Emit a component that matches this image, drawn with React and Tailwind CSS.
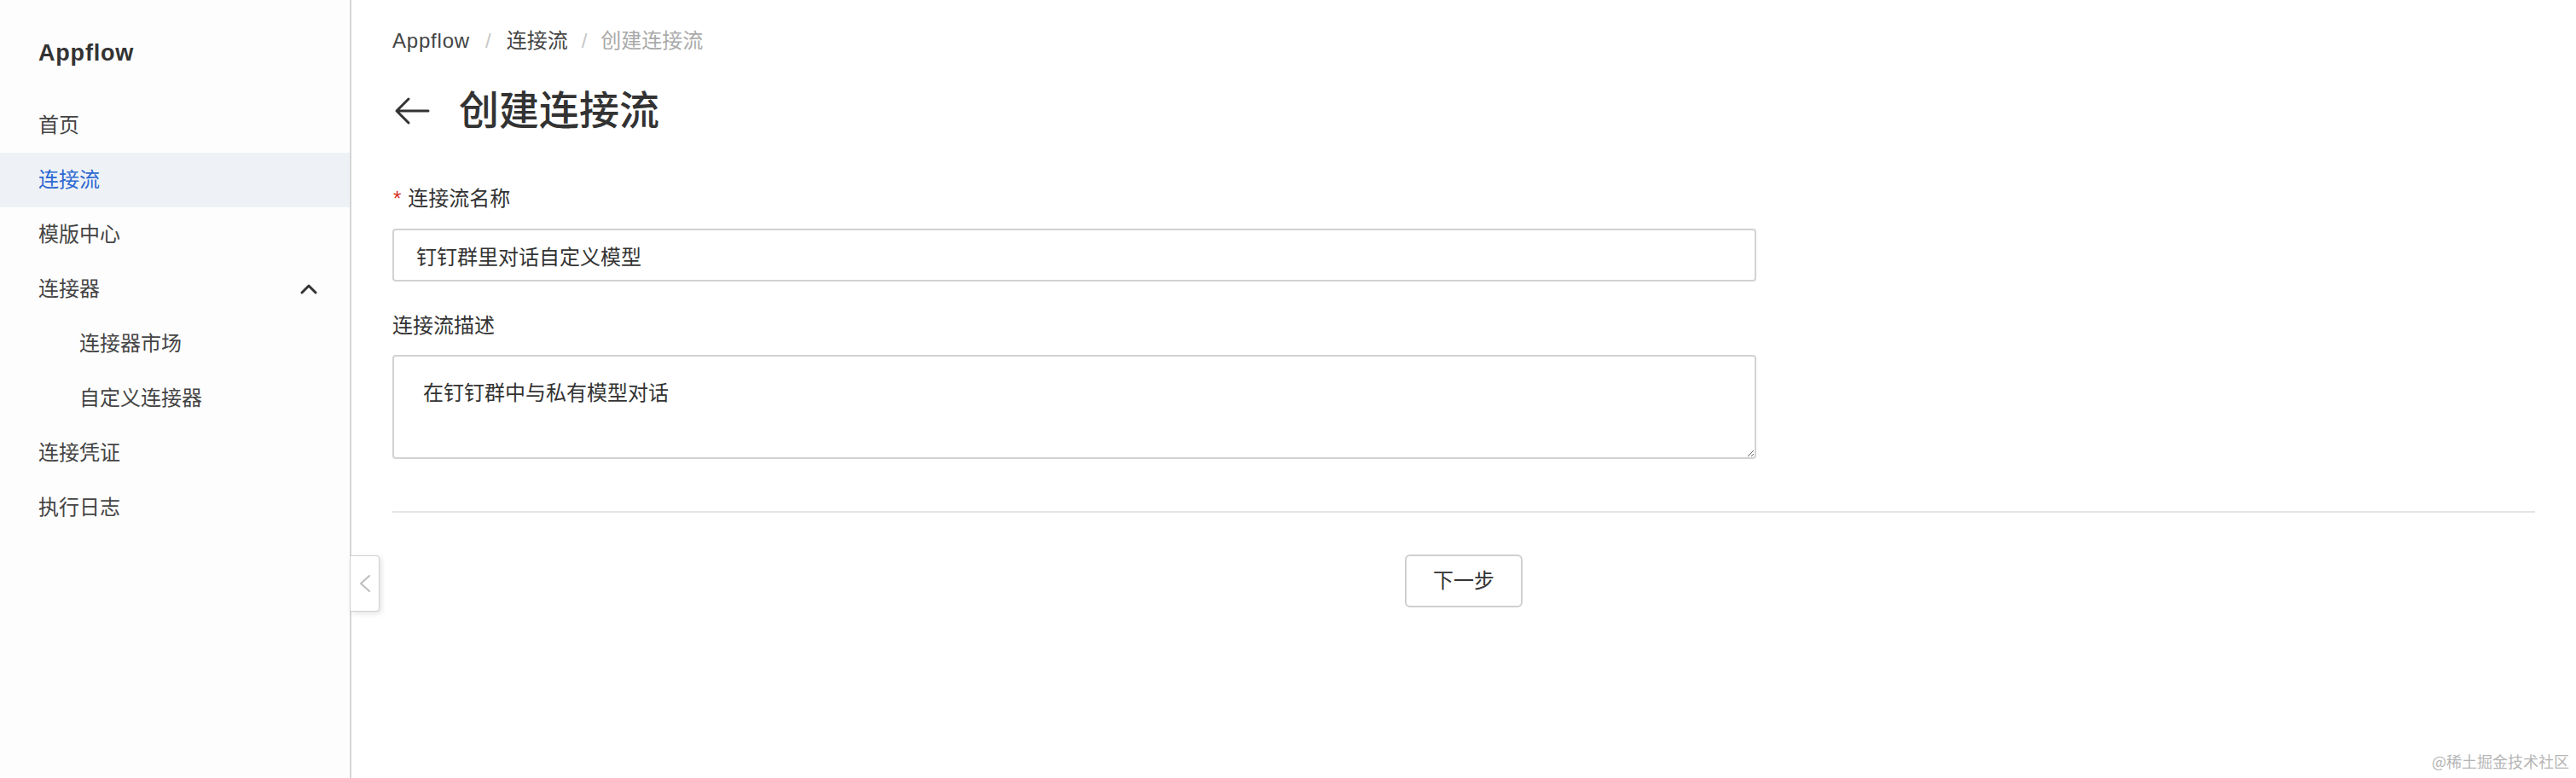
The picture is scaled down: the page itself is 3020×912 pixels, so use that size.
import React from 'react';

const FONT = { fontFamily: '"Liberation Sans", "Noto Sans CJK SC", sans-serif' };

const navItems = [
  { label: '首页' },
  { label: '连接流', active: true },
  { label: '模版中心' },
  { label: '连接器', group: true },
  { label: '连接器市场', sub: true },
  { label: '自定义连接器', sub: true },
  { label: '连接凭证' },
  { label: '执行日志' },
];

const Sidebar = () => (
  <aside className="w-[412px] shrink-0 h-full bg-[#fdfdfd] border-r-2 border-[#d6d6d6] flex flex-col">
    <div className="pl-[45px] pt-[44px] h-[80px] text-[27px] leading-[36px] font-bold tracking-[0.8px] text-[#333]">Appflow</div>
    <nav className="mt-[35px] flex flex-col">
      {navItems.map((item) => (
        <div
          key={item.label}
          className={`h-[64px] flex items-center text-[24px] ${item.sub ? 'pl-[93px]' : 'pl-[45px]'} ${
            item.active ? 'bg-[#eef2f6] text-[#2c67d1]' : 'text-[#444]'
          }`}
        >
          <span className="flex-1">{item.label}</span>
          {item.group && (
            <svg className="mr-[38px] w-[20px] h-[12px]" viewBox="0 0 20 12" fill="none" stroke="#333" strokeWidth="3" strokeLinecap="round" strokeLinejoin="round">
              <path d="M2 10 L10 2 L18 10" />
            </svg>
          )}
        </div>
      ))}
    </nav>
  </aside>
);

const App = () => {
  return (
    <div className="relative w-[3020px] h-[912px] flex bg-white overflow-hidden" style={FONT}>
      <Sidebar />

      {/* collapse tab */}
      <button className="absolute left-[411px] top-[651px] w-[34px] h-[66px] bg-white border border-l-0 border-[#d0d0d0] rounded-r-[4px] shadow-[2px_2px_6px_rgba(0,0,0,0.12)] flex items-center justify-center">
        <svg className="w-[14px] h-[22px]" viewBox="0 0 14 22" fill="none" stroke="#bdbdbd" strokeWidth="2" strokeLinecap="round" strokeLinejoin="round">
          <path d="M12 2 L2 11 L12 20" />
        </svg>
      </button>

      <main className="flex-1 px-[48px] pt-[30px]">
        {/* breadcrumb */}
        <div className="flex items-center text-[24px] leading-[36px] text-[#444]">
          <span className="tracking-[0.8px]">Appflow</span>
          <span className="mx-[18px] text-[#c8c8c8]">/</span>
          <span>连接流</span>
          <span className="mx-[16px] text-[#c8c8c8]">/</span>
          <span className="text-[#aaa]">创建连接流</span>
        </div>

        {/* title */}
        <div className="mt-[32px] h-[64px] flex items-center">
          <svg className="ml-[2px] w-[42px] h-[34px]" viewBox="0 0 42 34" fill="none" stroke="#333" strokeWidth="3" strokeLinecap="round" strokeLinejoin="round">
            <path d="M40 17 H3 M17 3 L3 17 L17 31" />
          </svg>
          <h1 className="ml-[34px] text-[47px] leading-[64px] font-medium text-[#333]">创建连接流</h1>
        </div>

        {/* form */}
        <div className="mt-[53px] flex items-center text-[24px] leading-[36px] text-[#333]">
          <span className="text-[#d93026] mr-[8px] ml-[1px]">*</span>
          <span>连接流名称</span>
        </div>
        <input
          className="mt-[17px] w-[1599px] h-[62px] px-[26px] border-2 border-[#d2d2d2] rounded-[4px] text-[24px] text-[#333] outline-none bg-white"
          style={FONT}
          defaultValue="钉钉群里对话自定义模型"
        />

        <div className="mt-[34px] text-[24px] leading-[36px] text-[#333]">连接流描述</div>
        <textarea
          className="mt-[16px] block w-[1599px] h-[122px] px-[34px] pt-[25px] border-2 border-[#d2d2d2] rounded-[4px] text-[24px] leading-[36px] text-[#333] outline-none bg-white"
          style={FONT}
          defaultValue="在钉钉群中与私有模型对话"
        />

        <div className="mt-[61px] h-[2px] bg-[#e4e4e4]" />

        <div className="mt-[49px] flex justify-center">
          <button className="w-[138px] h-[62px] border-2 border-[#cfcfcf] rounded-[6px] bg-white text-[24px] text-[#333]">下一步</button>
        </div>
      </main>

      {/* watermark */}
      <div className="absolute right-[8px] bottom-[6px] text-[18px] text-[#b5b5b5]" style={{ fontFamily: '"Noto Sans CJK SC", sans-serif' }}>
        @稀土掘金技术社区
      </div>
    </div>
  );
};

export default App;
